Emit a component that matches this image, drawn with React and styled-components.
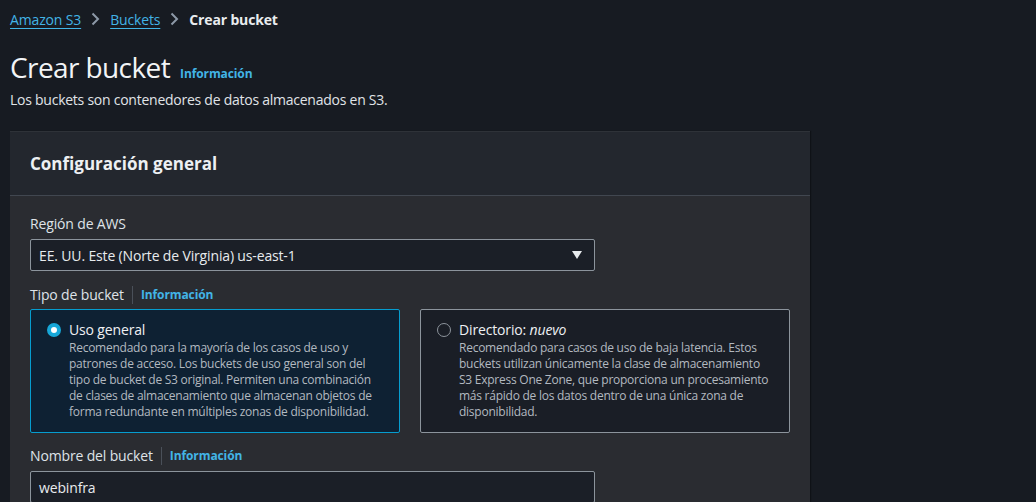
import React from 'react'
import styled, { createGlobalStyle } from 'styled-components'

const GlobalStyle = createGlobalStyle`
	html, body {
		margin: 0;
		padding: 0;
		background: #171b22;
	}
	body {
		font-family: 'Open Sans', 'Noto Sans', sans-serif;
		color: #dfe3e8;
		letter-spacing: -0.15px;
		-webkit-font-smoothing: antialiased;
	}
`

const Page = styled.div`
	width: 1036px;
	height: 502px;
	overflow: hidden;
	padding: 0 10px;
	box-sizing: border-box;
`

const Breadcrumbs = styled.nav`
	display: flex;
	align-items: center;
	height: 38px;
	font-size: 14px;
`

const Crumb = styled.a`
	color: #42b4e6;
	text-decoration: underline;
	text-underline-offset: 3px;
	text-decoration-thickness: 1px;
`

const Current = styled.span`
	color: #e9ecef;
	font-weight: 700;
`

const Chevron = styled.svg`
	width: 16px;
	height: 16px;
	margin: 0 7px 0 6px;
	color: #8d99a8;
`

const TitleRow = styled.div`
	display: flex;
	align-items: baseline;
	gap: 10px;
	margin-top: 11px;
`

const Title = styled.h1`
	margin: 0;
	font-size: 28px;
	font-weight: 400;
	letter-spacing: -0.6px;
	color: #f2f4f6;
	line-height: 36px;
`

const Info = styled.a`
	color: #42b4e6;
	font-size: 12px;
	font-weight: 700;
	letter-spacing: -0.1px;
`

const Subtitle = styled.p`
	margin: 5px 0 0;
	font-size: 14px;
	line-height: 20px;
	letter-spacing: -0.25px;
	color: #e0e4e8;
`

const Panel = styled.section`
	width: 800px;
	margin-top: 21px;
	background: #2a2c31;
	box-shadow: 1px 0 1px #0f1217;
	border-top: 1px solid #2e3238;
`

const PanelHeader = styled.header`
	height: 63px;
	display: flex;
	align-items: center;
	padding: 0 20px;
	background: #23272e;
	border-bottom: 1px solid #414750;
`

const PanelTitle = styled.h2`
	margin: 0;
	font-size: 17px;
	font-weight: 700;
	letter-spacing: 0;
	color: #edf0f3;
`

const PanelBody = styled.div`
	padding: 18px 20px 0;
	display: flex;
	flex-direction: column;
`

const LabelRow = styled.div`
	display: flex;
	align-items: center;
	font-size: 14px;
	line-height: 20px;
	color: #dfe3e8;
	margin-bottom: ${p => p.$gap || 5}px;
`

const Divider = styled.span`
	width: 1px;
	height: 18px;
	background: #4a5059;
	margin: 0 8px;
`

const Field = styled.div`
	width: 565px;
	height: 32px;
	box-sizing: border-box;
	display: flex;
	align-items: center;
	justify-content: space-between;
	padding: 0 11px 0 8px;
	background: #1b1f27;
	border: 1px solid #8c949c;
	border-radius: 2px;
	font-size: 14px;
	color: #e8ebee;
	margin-bottom: 14px;
`

const Caret = styled.svg`
	width: 12px;
	height: 10px;
	color: #e8ebee;
`

const Tiles = styled.div`
	display: grid;
	grid-template-columns: 370px 370px;
	gap: 20px;
	margin-bottom: 13px;
`

const Tile = styled.label`
	display: flex;
	gap: 8px;
	box-sizing: border-box;
	height: 124px;
	padding: 9px 19px 9px 16px;
	background: ${p => (p.$selected ? '#0e2133' : '#1a1e26')};
	border: 1px solid ${p => (p.$selected ? '#069dcf' : '#8c949c')};
	border-radius: 2px;
`

const Radio = styled.span`
	flex: none;
	width: 14px;
	height: 14px;
	margin-top: 4px;
	box-sizing: border-box;
	border-radius: 50%;
	border: ${p => (p.$checked ? '4px solid #17a7d8' : '1.5px solid #8d949c')};
	background: ${p => (p.$checked ? '#ffffff' : 'transparent')};
`

const TileText = styled.div`
	display: flex;
	flex-direction: column;
`

const TileTitle = styled.span`
	font-size: 14px;
	line-height: 21px;
	color: #eef0f3;
	em {
		font-style: italic;
	}
`

const TileDesc = styled.span`
	font-size: 12px;
	line-height: 16px;
	letter-spacing: -0.25px;
	color: #b3b9c0;
`

function Chev() {
	return (
		<Chevron viewBox='0 0 16 16' fill='none'>
			<path d='M5.5 2.5 11 8l-5.5 5.5' stroke='currentColor' strokeWidth='2' />
		</Chevron>
	)
}

function App() {
	return (
		<>
			<GlobalStyle />
			<Page>
				<Breadcrumbs>
					<Crumb>Amazon S3</Crumb>
					<Chev />
					<Crumb>Buckets</Crumb>
					<Chev />
					<Current>Crear bucket</Current>
				</Breadcrumbs>

				<TitleRow>
					<Title>Crear bucket</Title>
					<Info>Información</Info>
				</TitleRow>
				<Subtitle>Los buckets son contenedores de datos almacenados en S3.</Subtitle>

				<Panel>
					<PanelHeader>
						<PanelTitle>Configuración general</PanelTitle>
					</PanelHeader>
					<PanelBody>
						<LabelRow>Región de AWS</LabelRow>
						<Field>
							<span>EE. UU. Este (Norte de Virginia) us-east-1</span>
							<Caret viewBox='0 0 12 10'>
								<path d='M1 1h10L6 9z' fill='currentColor' />
							</Caret>
						</Field>

						<LabelRow $gap={4}>
							Tipo de bucket
							<Divider />
							<Info>Información</Info>
						</LabelRow>
						<Tiles>
							<Tile $selected>
								<Radio $checked />
								<TileText>
									<TileTitle>Uso general</TileTitle>
									<TileDesc>
										Recomendado para la mayoría de los casos de uso y patrones de acceso. Los
										buckets de uso general son del tipo de bucket de S3 original. Permiten una
										combinación de clases de almacenamiento que almacenan objetos de forma
										redundante en múltiples zonas de disponibilidad.
									</TileDesc>
								</TileText>
							</Tile>
							<Tile>
								<Radio />
								<TileText>
									<TileTitle>
										Directorio: <em>nuevo</em>
									</TileTitle>
									<TileDesc>
										Recomendado para casos de uso de baja latencia. Estos buckets utilizan
										únicamente la clase de almacenamiento S3 Express One Zone, que proporciona
										un procesamiento más rápido de los datos dentro de una única zona de
										disponibilidad.
									</TileDesc>
								</TileText>
							</Tile>
						</Tiles>

						<LabelRow>
							Nombre del bucket
							<Divider />
							<Info>Información</Info>
						</LabelRow>
						<Field>
							<span>webinfra</span>
						</Field>
					</PanelBody>
				</Panel>
			</Page>
		</>
	)
}

export default App
